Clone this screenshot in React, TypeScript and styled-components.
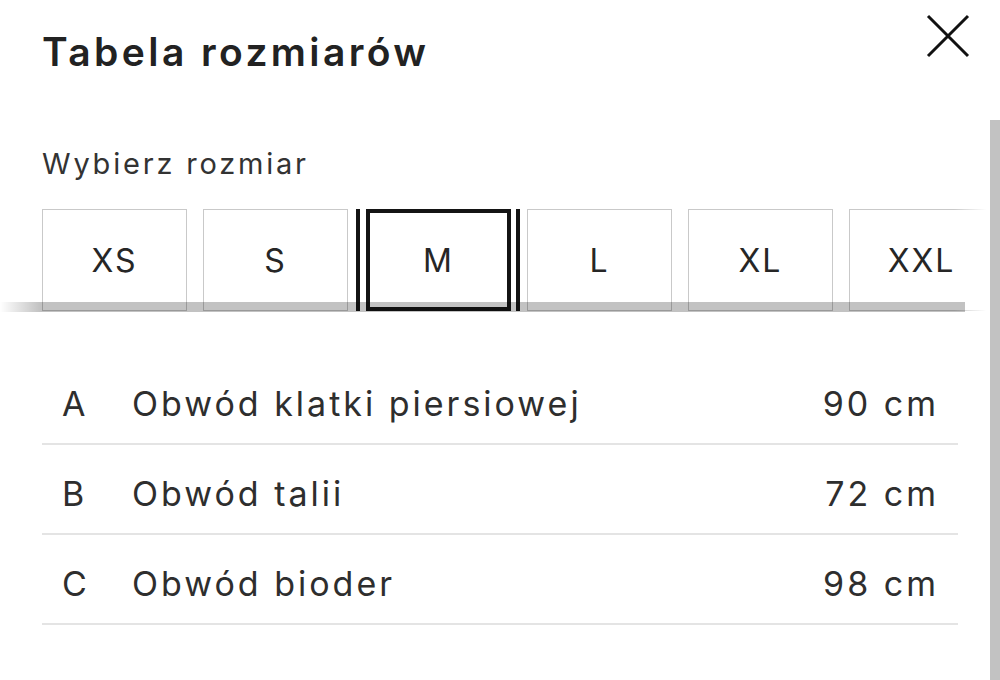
import React, { useState } from "react";
import styled, { createGlobalStyle, css } from "styled-components";

const GlobalStyle = createGlobalStyle`
  html, body {
    margin: 0;
    padding: 0;
    background: #ffffff;
    overflow: hidden;
  }
  body {
    font-family: Inter, "Open Sans", Arial, sans-serif;
    color: #2b2b2b;
  }
`;

const Sheet = styled.div`
  position: relative;
  width: 1000px;
  height: 680px;
  overflow: hidden;
  background: #fff;
`;

const Header = styled.header`
  display: flex;
  align-items: flex-start;
  justify-content: space-between;
  padding: 26px 30px 0 42px;
  height: 116px;
  box-sizing: border-box;
`;

const Title = styled.h1`
  margin: 0;
  font-size: 39px;
  line-height: 52px;
  font-weight: 600;
  letter-spacing: 3.4px;
  color: #222;
`;

const CloseButton = styled.button`
  margin-top: -12px;
  width: 44px;
  height: 44px;
  padding: 0;
  border: 0;
  background: transparent;
  cursor: pointer;
  display: flex;
  align-items: center;
  justify-content: center;
`;

const Label = styled.div`
  padding-left: 42px;
  font-size: 29px;
  line-height: 40px;
  letter-spacing: 2.8px;
  color: #333;
  margin-top: 28px;
`;

const SizeStrip = styled.div`
  position: relative;
  margin-top: 25px;
  width: 990px;
  height: 104px;
  overflow: hidden;

  /* white fade where the strip scrolls out on the right */
  &::after {
    content: "";
    position: absolute;
    top: 0;
    right: 0;
    width: 36px;
    height: 100%;
    background: linear-gradient(to right, rgba(255, 255, 255, 0), #fff 90%);
  }
`;

const SizeRow = styled.div`
  display: flex;
  gap: 16px;
  padding-left: 42px;
  height: 102px;
`;

const SizeButton = styled.button<{ $active: boolean }>`
  position: relative;
  flex: 0 0 145px;
  height: 102px;
  box-sizing: border-box;
  background: #fff;
  border: 1px solid #c9c9c9;
  font-family: inherit;
  font-size: 32px;
  letter-spacing: 2px;
  color: #262626;
  padding: 0;
  cursor: pointer;

  ${(p) =>
    p.$active &&
    css`
      border: 4px solid #141414;
      margin-left: 2px;

      &::before,
      &::after {
        content: "";
        position: absolute;
        top: -4px;
        bottom: -4px;
        width: 4px;
        background: #141414;
      }
      &::before {
        left: -14px;
      }
      &::after {
        right: -13px;
      }
    `}
`;

const ScrollBand = styled.div`
  position: absolute;
  left: 0;
  top: 93px;
  width: 965px;
  height: 10px;
  background: linear-gradient(
    to right,
    rgba(0, 0, 0, 0) 0px,
    rgba(0, 0, 0, 0.24) 40px,
    rgba(0, 0, 0, 0.24) 100%
  );
  z-index: 1;
`;

const Table = styled.div`
  margin: 42px 0 0 42px;
  width: 916px;
  display: flex;
  flex-direction: column;
`;

const Row = styled.div`
  display: grid;
  grid-template-columns: 70px 1fr auto;
  align-items: center;
  height: 90px;
  box-sizing: border-box;
  padding: 8px 22px 0 20px;
  border-bottom: 2px solid #e4e4e4;
  font-size: 34px;
  letter-spacing: 3px;
  color: #2e2e2e;
`;

const Letter = styled.span``;
const Name = styled.span``;
const Value = styled.span`
  text-align: right;
  margin-right: -3px;
`;

const VScrollbar = styled.div`
  position: absolute;
  top: 120px;
  right: 0;
  width: 10px;
  bottom: 0;
  background: #c2c2c2;
`;

const sizes = ["XS", "S", "M", "L", "XL", "XXL"];

const measurements = [
  { key: "A", name: "Obwód klatki piersiowej", value: "90 cm" },
  { key: "B", name: "Obwód talii", value: "72 cm" },
  { key: "C", name: "Obwód bioder", value: "98 cm" },
];

export default function App() {
  const [selected, setSelected] = useState("M");
  return (
    <Sheet>
      <GlobalStyle />
      <Header>
        <Title>Tabela rozmiarów</Title>
        <CloseButton aria-label="Zamknij">
          <svg width="44" height="44" viewBox="0 0 44 44">
            <path d="M2 2 L42 42 M42 2 L2 42" stroke="#111" strokeWidth="3" fill="none" />
          </svg>
        </CloseButton>
      </Header>
      <Label>Wybierz rozmiar</Label>
      <SizeStrip>
        <SizeRow>
          {sizes.map((s) => (
            <SizeButton key={s} $active={s === selected} onClick={() => setSelected(s)}>
              {s}
            </SizeButton>
          ))}
        </SizeRow>
        <ScrollBand />
      </SizeStrip>
      <Table>
        {measurements.map((m) => (
          <Row key={m.key}>
            <Letter>{m.key}</Letter>
            <Name>{m.name}</Name>
            <Value>{m.value}</Value>
          </Row>
        ))}
      </Table>
      <VScrollbar />
    </Sheet>
  );
}
